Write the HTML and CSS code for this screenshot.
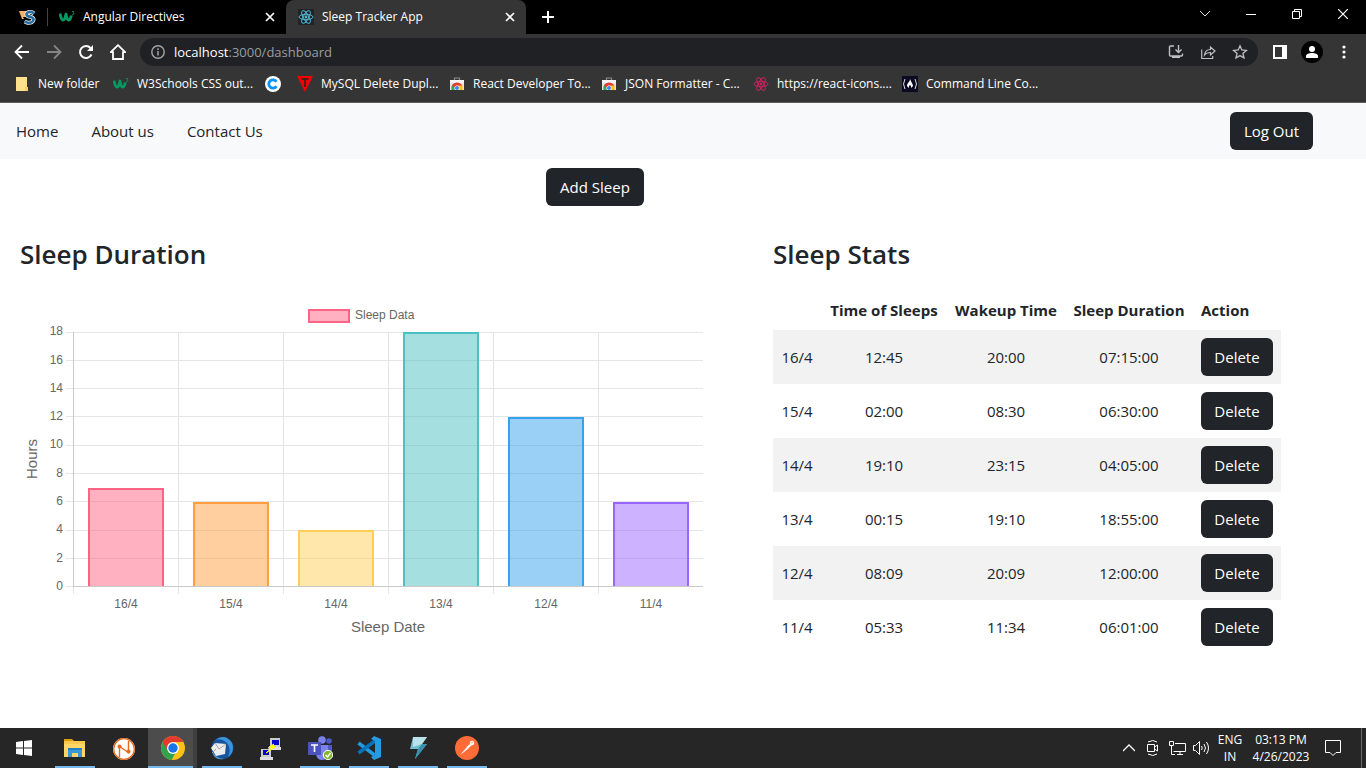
FILE: index.html
```html
<!DOCTYPE html>
<html lang="en">
<head>
<meta charset="utf-8">
<meta name="viewport" content="width=device-width, initial-scale=1">
<title>Sleep Tracker App</title>
<link rel="stylesheet" href="styles.css">
</head>
<body>
<svg class="sprite" aria-hidden="true">
  <symbol id="w3" viewBox="0 0 16 16">
    <path d="M1 4.500c1 5 2 7 3.500 6.500S6.500 7 7 5c.5 4 1.500 6.500 3 6s2-3 2.300-4.500" fill="none" stroke="#059862" stroke-width="2.800" stroke-linejoin="round"/>
    <path d="M13 2.500h2l-1 1.300q1.400.2.800 1.500-.6.900-1.800.3" fill="none" stroke="#059862" stroke-width=".8"/>
  </symbol>
  <symbol id="atom" viewBox="0 0 16 16">
    <g fill="none" stroke="currentColor" stroke-width="1"><ellipse cx="8" cy="8" rx="7" ry="2.700"/><ellipse cx="8" cy="8" rx="7" ry="2.700" transform="rotate(60 8 8)"/><ellipse cx="8" cy="8" rx="7" ry="2.700" transform="rotate(120 8 8)"/></g>
    <circle cx="8" cy="8" r="1.400" fill="currentColor"/>
  </symbol>
  <symbol id="close" viewBox="0 0 10 10"><path d="M1 1l8 8M9 1l-8 8" stroke="currentColor" stroke-width="1.700" fill="none"/></symbol>
  <symbol id="store" viewBox="0 0 16 16">
    <path d="M5.500 4V2h5v2" fill="none" stroke="#8a8a8a" stroke-width="1.200"/>
    <path d="M1 4h14v10H1z" fill="#e4e4e4"/><path d="M1 4h14v3H1z" fill="#f7f7f7"/>
    <path d="M2.500 14a5.500 5.500 0 0 1 1-5.500L8 11v3z" fill="#3aa757"/>
    <path d="M13.500 14a5.500 5.500 0 0 0-.5-5H8v5z" fill="#fbc116"/>
    <path d="M3 9.500c2-4 8-4 10.300 0H8L5.500 12z" fill="#e33b2e"/>
    <circle cx="8" cy="12" r="2.600" fill="#fff"/><circle cx="8" cy="12" r="2" fill="#4285f4"/><path d="M1 14h14v2H1z" fill="#353535"/>
  </symbol>
</svg>

<header class="browser">
  <div class="tabs">
    <button class="pinned" aria-label="Pinned tab"><svg width="18" height="16" viewBox="0 0 18 16"><path d="M0 2h11v4H6l1 2H4l1 2H3z" fill="#f4b266"/><path d="M15 4.500Q13 2.500 10 3 6.500 4 8 6.500q1 1 4 1.500 3.500 1 2 4-2 2.500-6 1.500l-2.500-1" fill="none" stroke="#fff" stroke-width="4"/><path d="M15 4.500Q13 2.500 10 3 6.500 4 8 6.500q1 1 4 1.500 3.500 1 2 4-2 2.500-6 1.500l-2.500-1" fill="none" stroke="#2d6f9f" stroke-width="2.800"/></svg></button>
    <div class="tab">
      <svg class="i16"><use href="#w3"/></svg><span class="tab-title">Angular Directives</span>
      <button class="tab-close" aria-label="Close tab"><svg class="i10"><use href="#close"/></svg></button>
    </div>
    <div class="tab tab-active">
      <svg class="i16 react"><use href="#atom"/></svg><span class="tab-title">Sleep Tracker App</span>
      <button class="tab-close" aria-label="Close tab"><svg class="i10"><use href="#close"/></svg></button>
    </div>
    <button class="new-tab" aria-label="New tab"><svg width="12" height="12" viewBox="0 0 12 12"><path d="M6 0v12M0 6h12" stroke="#fff" stroke-width="2"/></svg></button>
    <div class="window-controls">
      <button aria-label="Search tabs"><svg width="10" height="6" viewBox="0 0 10 6"><path d="M0 0l5 5 5-5" fill="none" stroke="#ddd"/></svg></button>
      <button aria-label="Minimize"><svg width="10" height="2" viewBox="0 0 10 2"><path d="M0 1.500h10" stroke="#fff"/></svg></button>
      <button aria-label="Restore"><svg width="10" height="10" viewBox="0 0 10 10"><path d="M.5 2.500h7v7h-7zM2.500 2V.5h7v7H8" fill="none" stroke="#fff"/></svg></button>
      <button aria-label="Close"><svg width="10" height="10" viewBox="0 0 10 10"><path d="M0 0l10 10M10 0L0 10" stroke="#fff" stroke-width="1.200"/></svg></button>
    </div>
  </div>

  <div class="toolbar">
    <button class="tool" aria-label="Back"><svg width="16" height="16" viewBox="0 0 16 16"><path d="M15 8H2M8 1.500L1.500 8 8 14.500" fill="none" stroke="#fff" stroke-width="1.800"/></svg></button>
    <button class="tool" aria-label="Forward"><svg width="16" height="16" viewBox="0 0 16 16"><path d="M1 8h13M8 1.500L14.500 8 8 14.500" fill="none" stroke="#858585" stroke-width="1.800"/></svg></button>
    <button class="tool" aria-label="Reload"><svg width="16" height="16" viewBox="0 0 16 16"><path d="M13.500 10.500A6 6 0 1 1 12.500 4" fill="none" stroke="#fff" stroke-width="2"/><path d="M15 1v6H9z" fill="#fff"/></svg></button>
    <button class="tool" aria-label="Home"><svg width="16" height="16" viewBox="0 0 16 16"><path d="M.8 8.200L8 1.200l7.200 7H13V15H3V8.200z" fill="none" stroke="#fff" stroke-width="1.800"/></svg></button>
    <div class="omnibox">
      <svg width="14" height="14" viewBox="0 0 14 14"><circle cx="7" cy="7" r="6.200" fill="none" stroke="#a2a4a7" stroke-width="1.400"/><path d="M7 6v4.500M7 3.300v1.600" stroke="#a2a4a7" stroke-width="1.500"/></svg>
      <span class="url"><b>localhost</b>:3000/dashboard</span>
      <button aria-label="Install app"><svg width="16" height="16" viewBox="0 0 16 16"><path d="M6 2H2.500Q1.500 2 1.500 3v8q0 1 1 1h11q1 0 1-1V9.500M10.500 1v7M7.500 5.500l3 3 3-3" fill="none" stroke="#bfc0c2" stroke-width="1.400"/><path d="M4 12h8v2H4z" fill="#bfc0c2"/></svg></button>
      <button aria-label="Share"><svg width="16" height="16" viewBox="0 0 16 16"><path d="M1.700 5.500v9h11V12M4.500 11c.5-4 3-5.500 6-5.500V3L15 7l-4.500 4V8.500c-2.500 0-4.500.5-6 2.500z" fill="none" stroke="#bfc0c2" stroke-width="1.200"/></svg></button>
      <button aria-label="Bookmark"><svg width="16" height="16" viewBox="0 0 16 16"><path d="M8 1.800l1.800 4.200 4.600.4-3.500 3 1.100 4.600L8 11.600 4 14l1.100-4.600-3.500-3 4.600-.4z" fill="none" stroke="#bfc0c2" stroke-width="1.300"/></svg></button>
    </div>
    <button class="tool" aria-label="Side panel"><svg width="14" height="14" viewBox="0 0 14 14"><path d="M0 0h14v14H0zM2 2v10h7V2z" fill="#fff" fill-rule="evenodd"/></svg></button>
    <button class="tool" aria-label="Profile"><svg width="22" height="22" viewBox="0 0 22 22"><circle cx="11" cy="11" r="11"/><circle cx="11" cy="8" r="3" fill="#fff"/><path d="M5 17v-2c0-4 12-4 12 0v2z" fill="#fff"/></svg></button>
    <button class="tool" aria-label="Menu"><svg width="4" height="14" viewBox="0 0 4 14"><g fill="#fff"><circle cx="2" cy="2" r="1.600"/><circle cx="2" cy="7" r="1.600"/><circle cx="2" cy="12" r="1.600"/></g></svg></button>
  </div>

  <nav class="bookmarks" aria-label="Bookmarks">
    <a class="folder" href="#"><svg width="12" height="16" viewBox="0 0 12 16"><path d="M0 1h11v10h1v4H0z" fill="#ffe08c"/><path d="M9 11h3v4H9z" fill="#f5cf6b"/></svg>New folder</a>
    <a href="#"><svg class="i16"><use href="#w3"/></svg>W3Schools CSS out...</a>
    <a class="icon-only" href="#" aria-label="Coding site"><svg class="i16" viewBox="0 0 16 16"><circle cx="8" cy="8" r="8" fill="#fff"/><path d="M11.500 10.300A4.200 4.200 0 1 1 11.500 5.700" fill="none" stroke="#0b93f5" stroke-width="2.800"/></svg></a>
    <a href="#"><svg class="i16" viewBox="0 0 16 16"><path d="M0 0h16L8 16z" fill="#f50000"/><path d="M4.500 3h7M8 3v8" stroke="#252525" stroke-width="1.600"/></svg>MySQL Delete Dupl...</a>
    <a href="#"><svg class="i16"><use href="#store"/></svg>React Developer To...</a>
    <a href="#"><svg class="i16"><use href="#store"/></svg>JSON Formatter - C...</a>
    <a class="react-icons" href="#"><svg class="i16"><use href="#atom"/></svg>https://react-icons....</a>
    <a href="#"><svg class="i16" viewBox="0 0 16 16"><path d="M0 0h16v16H0z" fill="#0a0a23"/><path d="M3 3Q0 8 3 13M13 3q3 5 0 10" fill="none" stroke="#ddd"/><path d="M8 3c0 3-3 4-3 7l2 2V9l1 1 1-1v3l2-2c0-2-2-4-3-7z" fill="#fff"/></svg>Command Line Co...</a>
  </nav>
</header>

<div class="page">
  <nav class="navbar" aria-label="Main">
    <a href="#">Home</a><a href="#">About us</a><a href="#">Contact Us</a>
    <button class="btn">Log Out</button>
  </nav>
  <div class="actions"><button class="btn">Add Sleep</button></div>
  <main class="content">
    <section>
      <h2>Sleep Duration</h2>
      <svg class="chart" viewBox="0 0 683 350" role="img" aria-label="Sleep data by date">
        <rect x="289" y="21" width="40" height="12" class="pink"/>
        <text x="335" y="30">Sleep Data</text>
        <g class="grid">
          <path d="M46 43h637M46 71h637M46 99h637M46 127h637M46 156h637M46 184h637M46 212h637M46 241h637M46 269h637M46 297h7M158 43v262M263 43v262M368 43v262M473 43v262M578 43v262M53 298v7"/>
        </g>
        <g class="bars">
          <path class="pink" d="M69 297v-97h74v97"/>
          <path class="orange" d="M174 297v-83h74v83"/>
          <path class="yellow" d="M279 297v-55h74v55"/>
          <path class="teal" d="M384 297V44h74v253"/>
          <path class="blue" d="M489 297V129h74v168"/>
          <path class="purple" d="M594 297v-83h74v83"/>
        </g>
        <path class="axis" d="M53 43v255M53 297h630"/>
        <g text-anchor="end">
          <text x="43" y="46">18</text><text x="43" y="75">16</text><text x="43" y="103">14</text><text x="43" y="131">12</text><text x="43" y="159">10</text><text x="43" y="188">8</text><text x="43" y="216">6</text><text x="43" y="244">4</text><text x="43" y="273">2</text><text x="43" y="301">0</text>
        </g>
        <g text-anchor="middle">
          <text x="106" y="319">16/4</text><text x="211" y="319">15/4</text><text x="316" y="319">14/4</text><text x="421" y="319">13/4</text><text x="526" y="319">12/4</text><text x="631" y="319">11/4</text>
          <text class="axis-title" x="368" y="343">Sleep Date</text>
          <text class="axis-title" transform="translate(17 170) rotate(-90)">Hours</text>
        </g>
      </svg>
    </section>
    <section>
      <h2>Sleep Stats</h2>
      <table>
        <colgroup><col class="c-date"><col class="c-sleep"><col class="c-wake"><col class="c-duration"><col class="c-action"></colgroup>
        <thead><tr><td></td><th scope="col">Time of Sleeps</th><th scope="col">Wakeup Time</th><th scope="col">Sleep Duration</th><th scope="col" class="left">Action</th></tr></thead>
        <tbody>
          <tr><td>16/4</td><td>12:45</td><td>20:00</td><td>07:15:00</td><td><button class="btn">Delete</button></td></tr>
          <tr><td>15/4</td><td>02:00</td><td>08:30</td><td>06:30:00</td><td><button class="btn">Delete</button></td></tr>
          <tr><td>14/4</td><td>19:10</td><td>23:15</td><td>04:05:00</td><td><button class="btn">Delete</button></td></tr>
          <tr><td>13/4</td><td>00:15</td><td>19:10</td><td>18:55:00</td><td><button class="btn">Delete</button></td></tr>
          <tr><td>12/4</td><td>08:09</td><td>20:09</td><td>12:00:00</td><td><button class="btn">Delete</button></td></tr>
          <tr><td>11/4</td><td>05:33</td><td>11:34</td><td>06:01:00</td><td><button class="btn">Delete</button></td></tr>
        </tbody>
      </table>
    </section>
  </main>
</div>

<footer class="taskbar">
  <button class="start" aria-label="Start"><svg width="16" height="16" viewBox="0 0 16 16"><path d="M0 2l7-1v6.500H0zM8 .9L16 0v7.500H8zM0 8.500h7V15l-7-1zM8 8.500h8V16l-8-1z" fill="#fff"/></svg></button>
  <button class="app open" aria-label="File Explorer"><svg width="24" height="24" viewBox="0 0 24 24"><path d="M1 3h8l2 2h-10z" fill="#e09b0f"/><path d="M1 5h21v16H1z" fill="#ffd667"/><path d="M1 5h21v3H1z" fill="#f9c84e"/><path d="M5 21v-8h14v8h-4v-4H9v4z" fill="#3a96dd"/><path d="M5 12h14v2H5z" fill="#2380c5"/></svg></button>
  <button class="app" aria-label="Network app"><svg width="24" height="24" viewBox="0 0 24 24"><circle cx="12" cy="12" r="11" fill="#fff"/><path d="M7.500 20V9.500l9 6V4" fill="none" stroke="#e8691b" stroke-width="1.400"/><circle cx="7.500" cy="9.500" r="2" fill="#e8691b"/><circle cx="16.500" cy="14.500" r="2" fill="#e8691b"/><circle cx="12" cy="12" r="10.300" fill="none" stroke="#e8691b" stroke-width="1.200"/></svg></button>
  <button class="app open current" aria-label="Google Chrome"><svg width="24" height="24" viewBox="0 0 24 24"><circle cx="12" cy="12" r="12" fill="#fbc116"/><path d="M12 12L2 5.500A12 12 0 0 0 10.500 24l5-9z" fill="#2ea44f"/><path d="M1.600 6A12 12 0 0 1 22.400 6H12v6l-5.200 3z" fill="#e33b2e"/><circle cx="12" cy="12" r="6" fill="#fff"/><circle cx="12" cy="12" r="4.700" fill="#1a73e8"/></svg></button>
  <button class="app open" aria-label="Thunderbird"><svg width="24" height="24" viewBox="0 0 24 24"><circle cx="12.500" cy="12" r="11" fill="#17549d"/><path d="M5 4Q15-3 22 7q3 9-4 14 4-9-2-15-5-4-11-2z" fill="#3c94dc"/><path d="M1 12l4-5 11 1-1 10-9 2z" fill="#ededed"/><path d="M5 7l4 6 7-5M2 17l4-4" fill="none" stroke="#a5a5a5"/><path d="M2 15q3 7 12 8-10 2-12-8" fill="#58a6df"/></svg></button>
  <button class="app" aria-label="PuTTY"><svg width="24" height="24" viewBox="0 0 24 24"><path d="M11 1h10v9H11zM2 12h10v8H2z" fill="#ccc"/><path d="M13 3h7v5h-7zM4 13h6v5H4z" fill="#0000c8"/><path d="M9 10h13v3H10zM1 20h13v3H1z" fill="#ddd"/><path d="M15 7l-5 3 3 1-6 5 9-6-3-1z" fill="#ff0" stroke="#ff0" stroke-width="1"/></svg></button>
  <button class="app open" aria-label="Teams"><svg width="25" height="24" viewBox="0 0 25 24"><circle cx="14" cy="4" r="3.800" fill="#7b83eb"/><circle cx="21" cy="5" r="2.800" fill="#5059c9"/><path d="M17 9h7v8q-2 5-7 3z" fill="#5059c9"/><path d="M8 9h12v9q-1 6-6 6t-6-6z" fill="#7b83eb"/><path d="M0 6h13v13H0z" fill="#4b53bc"/><path d="M3 9h7M6.500 9v7" stroke="#fff" stroke-width="1.600"/><circle cx="20" cy="19" r="4.700" fill="#82b82b" stroke="#fff"/><path d="M17.500 19l2 2 3-4" fill="none" stroke="#fff" stroke-width="1.400"/></svg></button>
  <button class="app open" aria-label="Visual Studio Code"><svg width="24" height="24" viewBox="0 0 24 24"><path d="M1.500 7l16 12" stroke="#229be0" stroke-width="3.500"/><path d="M1.500 17L18 5" stroke="#0873b9" stroke-width="3.500"/><path d="M17 0l7 3v18l-7 3-3-3 4-2V5l-4-2z" fill="#259ce1"/></svg></button>
  <button class="app open" aria-label="Thunder Client"><svg width="24" height="24" viewBox="0 0 24 24"><path d="M7 1h14l-5 7h5L9 23l3-10H4z" fill="#71bdd2"/><path d="M7 1h14l-5 7-9 3z" fill="#b9e2ea"/><path d="M12 13l4-5h5L9 23z" fill="#3a8fac"/></svg></button>
  <button class="app open" aria-label="Postman"><svg width="24" height="24" viewBox="0 0 24 24"><circle cx="12" cy="12" r="12" fill="#ff6c37"/><path d="M5 19l7-8 2 1-5 4z" fill="#fff"/><path d="M11.500 11l4-3.500 1.500 1.500-4 3.500z" fill="#fff"/><circle cx="17" cy="7" r="2.200" fill="#fff"/><path d="M16 7l2-1" stroke="#ff6c37" stroke-width=".7"/></svg></button>
  <div class="tray">
    <button aria-label="Show hidden icons"><svg width="12" height="8" viewBox="0 0 12 8"><path d="M0 7l6-6 6 6" fill="none" stroke="#fff" stroke-width="1.300"/></svg></button>
    <button aria-label="Meet now"><svg width="14" height="16" viewBox="0 0 14 16"><path d="M2 2q5-3 9 0M2 14q5 3 9 0M1.500 4.500h7v7h-7zM8.500 7l3-2v6l-3-2z" fill="none" stroke="#fff"/></svg></button>
    <button aria-label="Network"><svg width="17" height="14" viewBox="0 0 17 14"><path d="M6 2.500h10.500v8H4.500M11 10.500V13M8 13.500h6M.5.500h4v4h-4zM2.500 5v8.500H6" fill="none" stroke="#fff"/></svg></button>
    <button aria-label="Volume"><svg width="17" height="14" viewBox="0 0 17 14"><path d="M.5 4.500h2l4-4v13l-4-4h-2zM8.500 5q1.500 2 0 4M11 3q3 4 0 8M13.500 1q4 6 0 12" fill="none" stroke="#fff"/></svg></button>
    <button class="lang">ENG<br>IN</button>
    <button class="clock">03:13 PM<br>4/26/2023</button>
    <button class="notify" aria-label="Notifications"><svg width="16" height="16" viewBox="0 0 16 16"><path d="M.5.500h15v12H11l-3 3-3-3H.5z" fill="none" stroke="#fff"/></svg></button>
  </div>
</footer>
</body>
</html>
```
FILE: styles.css
```css
* { box-sizing: border-box; }
body {
  margin: 0;
  min-height: 100vh;
  display: flex;
  flex-direction: column;
  background: #fff;
  color: #212529;
  font: 15px/24px "Open Sans", "Noto Sans", sans-serif;
}
button { margin: 0; padding: 0; border: 0; background: none; color: inherit; font: inherit; }
a { color: inherit; text-decoration: none; }
svg { display: block; flex: none; }
.sprite { position: absolute; width: 0; height: 0; }
.i16 { width: 16px; height: 16px; }
.i10 { width: 10px; height: 10px; }

/* Browser frame */
.browser { background: #353535; color: #fff; font-size: 12px; line-height: 16px; border-bottom: 1px solid #5e5e5e; }
.tabs { display: flex; height: 34px; background: #000; }
.pinned { width: 48px; padding-left: 19px; margin: 8px 0; border-right: 1px solid #444; }
.tab { display: flex; align-items: center; width: 238px; padding: 0 10px 0 11px; gap: 8px; }
.tab-active { width: 240px; padding-left: 12px; background: #353535; border-radius: 8px 8px 0 0; }
.tab-title { flex: 1; white-space: nowrap; }
.tab-close { padding: 1px; }
.react { color: #4fb3cd; background: #20232a; }
.new-tab { padding: 0 16px; }
.window-controls { display: flex; margin-left: auto; height: 28px; }
.window-controls button { width: 46px; display: grid; place-items: center; }
.toolbar { display: flex; align-items: center; height: 36px; padding: 0 6px; }
.tool { width: 32px; height: 32px; display: grid; place-items: center; }
.omnibox { flex: 1; display: flex; align-items: center; gap: 16px; height: 28px; margin: 0 6px; padding: 0 10px 0 11px; border-radius: 14px; background: #202124; }
.url { flex: 1; margin-left: -7px; color: #9a9da1; font-size: 13px; }
.url b { color: #fff; font-weight: 400; }
.bookmarks { display: flex; gap: 16px; height: 32px; padding: 0 16px 4px; align-items: center; }
.bookmarks a { display: flex; align-items: center; gap: 8px; width: 136px; white-space: nowrap; }
.bookmarks .folder { width: 81px; gap: 10px; }
.bookmarks .icon-only { width: 16px; }
.bookmarks .react-icons { width: 133px; }
.react-icons svg { color: #c2255c; }

/* Application */
.page { flex: 1; }
.navbar { display: flex; align-items: center; gap: 33px; height: 56px; padding: 0 53px 1px 16px; background: #f8f9fa; }
.navbar .btn { margin-left: auto; }
.btn { height: 38px; padding: 0 13px; border-radius: 6px; background: #212529; color: #fff; }
.navbar .btn, .actions .btn { padding: 0 14px; }
.actions { display: flex; justify-content: center; padding: 9px 176px 0 0; }
.content { display: grid; grid-template-columns: 1fr 508px; gap: 70px; padding: 31px 85px 32px 20px; }
h2 { margin: 0; font-size: 26px; line-height: 34px; font-weight: 600; }
.chart { width: 100%; margin-top: 18px; overflow: visible; }
.chart text { fill: #666; font: 12px "Liberation Sans", sans-serif; }
.chart .axis-title { font-size: 15px; }
.grid, .axis { fill: none; stroke: #e5e5e5; shape-rendering: crispEdges; }
.axis { stroke: #c9c9c9; }
.bars { stroke-width: 2; }
.pink { fill: #ff638480; stroke: #ff6384; stroke-width: 2; }
.orange { fill: #ff9f4080; stroke: #ff9f40; }
.yellow { fill: #ffcd5680; stroke: #ffcd56; }
.teal { fill: #4bc0c080; stroke: #4bc0c0; }
.blue { fill: #36a2eb80; stroke: #36a2eb; }
.purple { fill: #9966ff80; stroke: #9966ff; }
table { width: 100%; margin-top: 19px; border-collapse: collapse; table-layout: fixed; text-align: center; }
th, td { padding: 8px 0; white-space: nowrap; }
th { font-weight: 700; }
.left { padding-left: 8px; text-align: left; }
tbody tr:nth-child(odd) { background: #f2f2f2; }
.c-date { width: 48px; }
.c-sleep { width: 126px; }
.c-wake { width: 118px; }
.c-duration { width: 128px; }
.c-action { width: 88px; }

/* Taskbar */
.taskbar { display: flex; height: 40px; background: #262626; color: #fff; font-size: 12px; line-height: 17px; }
.start { width: 50px; padding-left: 16px; }
.app { width: 49px; display: grid; place-items: center; padding-top: 2px; border: solid transparent; border-width: 0 4px 0 5px; }
.open { background: linear-gradient(#76b9ed, #76b9ed) bottom / 100% 2px no-repeat padding-box; padding-bottom: 2px; }
.current { border-left: 0; padding-left: 5px; border-right-color: #3f3f3f; background-color: #4c4c4c; }
.tray { display: flex; align-items: center; margin-left: auto; margin-right: 4px; border-right: 1px solid #6b6b6b; }
.tray button { width: 24px; height: 40px; display: grid; place-items: center; }
.tray .lang { display: block; width: 34px; }
.tray .clock { display: block; width: 68px; }
.tray .notify { width: 36px; margin-right: 10px; }
```
